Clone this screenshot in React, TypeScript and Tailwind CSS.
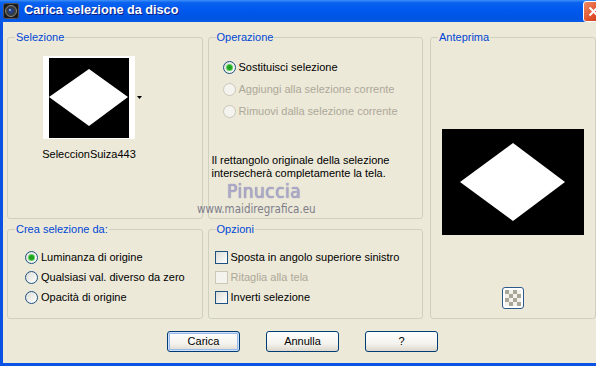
import type { ReactNode } from "react";

const ui = { fontFamily: '"Liberation Sans", Arial, sans-serif' };

function Group({ label, className, children }: { label: string; className?: string; children?: ReactNode }) {
  return (
    <div className={`relative rounded-[3px] border border-[#d0d0bf] ${className ?? ""}`}>
      <span className="absolute -top-[8px] left-[7px] bg-[#ece9d8] px-[1px] text-[11px] leading-[14px] text-[#0046d5]">
        {label}
      </span>
      {children}
    </div>
  );
}

function Radio({ label, checked, disabled }: { label: string; checked?: boolean; disabled?: boolean }) {
  return (
    <div className="flex h-[20px] items-center gap-[3px]">
      <span
        className={`flex h-[13px] w-[13px] items-center justify-center rounded-full border ${
          disabled
            ? "border-[#cac8bb] bg-[#f4f3ee]"
            : "border-[#1c5180] bg-[linear-gradient(135deg,#dcdcd7,#ffffff)]"
        }`}
      >
        {checked && <span className="h-[5px] w-[5px] rounded-full bg-[#21a121] shadow-[0_0_0_1px_#5fd35f]" />}
      </span>
      <span className={`text-[11px] ${disabled ? "text-[#aca899]" : "text-black"}`}>{label}</span>
    </div>
  );
}

function Check({ label, disabled }: { label: string; disabled?: boolean }) {
  return (
    <div className="flex h-[20px] items-center gap-[3px]">
      <span
        className={`h-[13px] w-[13px] border ${
          disabled
            ? "border-[#cac8bb] bg-[#f4f3ee]"
            : "border-[#1c5180] bg-[linear-gradient(135deg,#dcdcd7,#ffffff)]"
        }`}
      />
      <span className={`text-[11px] ${disabled ? "text-[#aca899]" : "text-black"}`}>{label}</span>
    </div>
  );
}

function Button({ label, primary }: { label: string; primary?: boolean }) {
  return (
    <button
      className={`h-[21px] w-[73px] rounded-[3px] border border-[#003c74] bg-[linear-gradient(180deg,#ffffff_0%,#f4f3ee_60%,#dcd8cc_100%)] text-[11px] text-black ${
        primary ? "shadow-[inset_0_0_0_1px_#cee0f8,inset_0_0_0_2px_#99b8ec]" : ""
      }`}
    >
      {label}
    </button>
  );
}

export default function App() {
  return (
    <div className="relative flex h-[366px] w-[596px] flex-col overflow-hidden bg-[#ece9d8]" style={ui}>
      {/* title bar */}
      <div className="flex h-[22px] w-[604px] shrink-0 items-center bg-[linear-gradient(180deg,#3d8ff7_0%,#0a62ef_12%,#0058ee_45%,#0054e3_85%,#0a5ce8_100%)] pl-[3px]">
        <svg width="16" height="16" viewBox="0 0 16 16">
          <rect x="0.5" y="0.5" width="15" height="15" rx="2" fill="#1a1a1a" stroke="#555" />
          <circle cx="8" cy="8" r="5.5" fill="#3a3a3a" stroke="#8a8a8a" />
          <circle cx="8" cy="8" r="3" fill="#24407a" />
          <circle cx="7" cy="7" r="1" fill="#9ab8ff" />
        </svg>
        <span className="ml-[5px] text-[12.7px] font-bold text-white [text-shadow:1px_1px_0_#0a1e80]">
          Carica selezione da disco
        </span>
        <div className="ml-auto flex h-[21px] w-[21px] items-center justify-center rounded-[3px] border border-white bg-[linear-gradient(135deg,#f08a62,#e0502a_60%,#c23a18)]">
          <svg width="11" height="11" viewBox="0 0 11 11">
            <path d="M1.5 1.5 L9.5 9.5 M9.5 1.5 L1.5 9.5" stroke="white" strokeWidth="2" />
          </svg>
        </div>
      </div>

      {/* body */}
      <div className="flex flex-1 flex-col border-b-[3px] border-l-[3px] border-[#0a52e4] pl-[4px] pt-[15px]">
        <div className="flex">
          <div className="flex w-[196px] flex-col">
            <Group label="Selezione" className="h-[182px] pl-[35px] pt-[18px]">
              <div className="flex w-[92px] flex-col items-center">
                <div className="relative bg-white px-[6px] pb-[1px] pt-[2px]">
                  <svg width="80" height="80" viewBox="0 0 80 80" className="block">
                    <rect width="80" height="80" fill="black" />
                    <polygon points="0,39 40,11 79,39 40,68" fill="white" />
                  </svg>
                  <svg width="5" height="3" viewBox="0 0 5 3" className="absolute -right-[7px] top-[40px]">
                    <polygon points="0,0 5,0 2.5,3" fill="black" />
                  </svg>
                </div>
                <span className="mt-[9px] text-[11px] leading-[13px] text-black">SeleccionSuiza443</span>
              </div>
            </Group>
            <Group label="Crea selezione da:" className="mt-[10px] h-[90px] pl-[17px] pt-[17px]">
              <Radio label="Luminanza di origine" checked />
              <Radio label="Qualsiasi val. diverso da zero" />
              <Radio label="Opacità di origine" />
            </Group>
          </div>

          <div className="ml-[5px] flex w-[216px] flex-col">
            <Group label="Operazione" className="h-[182px] pl-[3px] pt-[19px]">
              <div className="flex flex-col pl-[11px]">
                <div className="h-[22px]">
                  <Radio label="Sostituisci selezione" checked />
                </div>
                <div className="h-[22px]">
                  <Radio label="Aggiungi alla selezione corrente" disabled />
                </div>
                <Radio label="Rimuovi dalla selezione corrente" disabled />
              </div>
              <p className="mt-[33px] text-[11px] leading-[13px] text-black">
                Il rettangolo originale della selezione
                <br />
                intersecherà completamente la tela.
              </p>
            </Group>
            <Group label="Opzioni" className="mt-[10px] h-[90px] pl-[6px] pt-[17px]">
              <Check label="Sposta in angolo superiore sinistro" />
              <Check label="Ritaglia alla tela" disabled />
              <Check label="Inverti selezione" />
            </Group>
          </div>

          <Group label="Anteprima" className="ml-[7px] flex h-[282px] w-[166px] shrink-0 flex-col items-center pt-[91px]">
            <svg width="142" height="106" viewBox="0 0 142 106" className="block">
              <rect width="142" height="106" fill="black" />
              <polygon points="18,53 71,14 123,53 71,92" fill="white" />
            </svg>
            <div className="mt-[52px] flex h-[22px] w-[22px] items-center justify-center rounded-[3px] border border-[#2c5a8c] bg-white">
              <svg width="16" height="16" viewBox="0 0 16 16">
                <rect width="16" height="16" fill="#f2f1ec" />
                <rect x="0" y="0" width="4" height="4" fill="#a9a898" />
                <rect x="8" y="0" width="4" height="4" fill="#a9a898" />
                <rect x="4" y="4" width="4" height="4" fill="#a9a898" />
                <rect x="12" y="4" width="4" height="4" fill="#a9a898" />
                <rect x="0" y="8" width="4" height="4" fill="#a9a898" />
                <rect x="8" y="8" width="4" height="4" fill="#a9a898" />
                <rect x="4" y="12" width="4" height="4" fill="#a9a898" />
                <rect x="12" y="12" width="4" height="4" fill="#a9a898" />
              </svg>
            </div>
          </Group>
        </div>

        <div className="mt-[12px] flex gap-[26px] pl-[160px]">
          <Button label="Carica" primary />
          <Button label="Annulla" />
          <Button label="?" />
        </div>
      </div>

      {/* watermark */}
      <div className="pointer-events-none absolute left-[197px] top-[180px] flex flex-col">
        <span
          className="pl-[30px] text-[19px] leading-[22px] tracking-[0.5px] text-[#aeaacd] [text-shadow:0_0_1px_#6b6890]"
          style={{ fontFamily: '"DejaVu Sans Condensed", "DejaVu Sans", sans-serif' }}
        >
          Pinuccia
        </span>
        <span
          className="text-[11.5px] leading-[14px] text-[#7e7d8c]"
          style={{ fontFamily: '"DejaVu Sans Condensed", "DejaVu Sans", sans-serif' }}
        >
          www.maidiregrafica.eu
        </span>
      </div>
    </div>
  );
}
